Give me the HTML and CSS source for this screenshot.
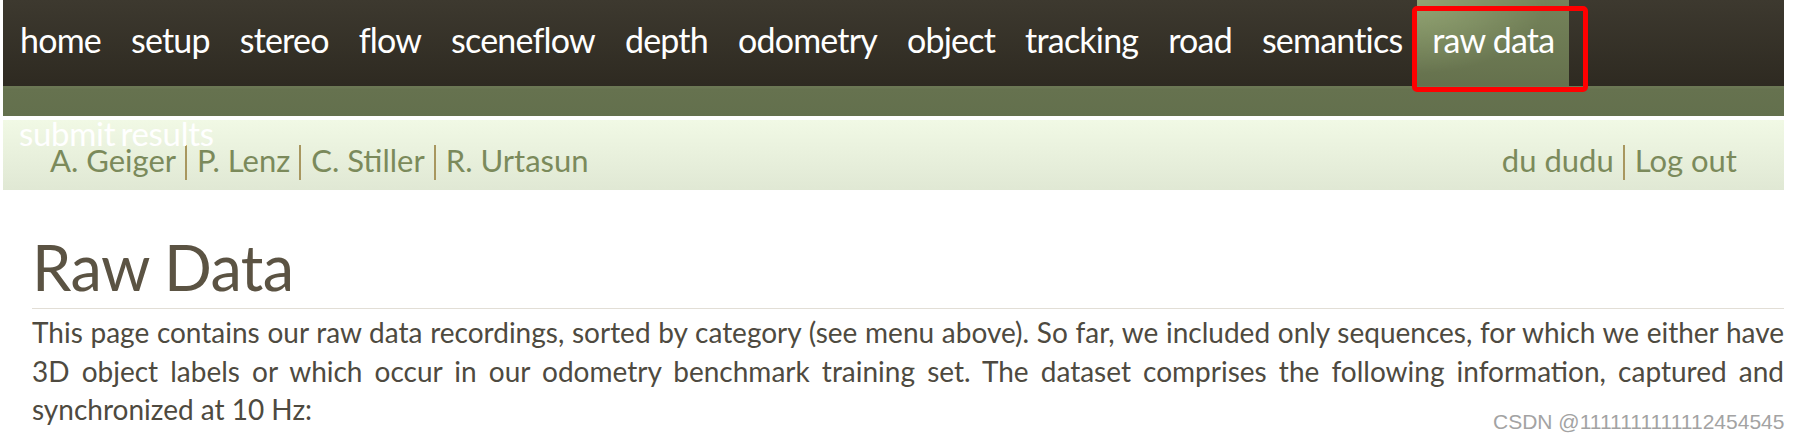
FILE: index.html
```html
<!DOCTYPE html>
<html lang="en">
<head>
<meta charset="utf-8">
<title>KITTI - Raw Data</title>
<link rel="stylesheet" href="styles.css">
</head>
<body>
<div class="page">
  <nav class="topnav">
    <a class="nav-item">home</a>
    <a class="nav-item">setup</a>
    <a class="nav-item">stereo</a>
    <a class="nav-item">flow</a>
    <a class="nav-item">sceneflow</a>
    <a class="nav-item">depth</a>
    <a class="nav-item">odometry</a>
    <a class="nav-item">object</a>
    <a class="nav-item">tracking</a>
    <a class="nav-item">road</a>
    <a class="nav-item">semantics</a>
    <a class="nav-item active">raw data</a>
  </nav>
  <div class="subnav"></div>
  <div class="authors-bar">
    <div class="authors">A. Geiger<span class="sep"></span>P. Lenz<span class="sep"></span>C. Stiller<span class="sep"></span>R. Urtasun</div>
    <div class="account">du dudu<span class="sep"></span>Log out</div>
    <span class="overflow-item">submit results</span>
  </div>
  <main class="content">
    <h1 class="title">Raw Data</h1>
    <hr class="rule">
    <p class="intro">This page contains our raw data recordings, sorted by category (see menu above). So far, we included only sequences, for which we either have 3D object labels or which occur in our odometry benchmark training set. The dataset comprises the following information, captured and synchronized at 10&nbsp;Hz:</p>
  </main>
</div>
<div class="annotation"></div>
<div class="watermark">CSDN @1111111111112454545</div>
</body>
</html>
```
FILE: styles.css
```css
html, body {
  margin: 0;
  padding: 0;
  background: #ffffff;
  overflow: hidden;
}

body {
  font-family: Lato, "Open Sans", sans-serif;
  position: relative;
  height: 438px;
}

.page {
  margin-left: 3px;
  width: 1781px;
}

.topnav {
  display: flex;
  height: 86px;
  padding-left: 2px;
  background: linear-gradient(#3d392f, #2e2a21);
}

.nav-item {
  display: block;
  padding: 20px 15px 0;
  height: 66px;
  line-height: 40px;
  font-size: 34px;
  color: #ffffff;
  letter-spacing: -0.8px;
  text-decoration: none;
}

.nav-item.active {
  background:
    radial-gradient(ellipse at 0% 0%, rgba(150, 168, 118, 0.9), rgba(150, 168, 118, 0) 60%),
    linear-gradient(#75835a, #65714d);
}

.subnav {
  height: 30px;
  background: linear-gradient(#6b7754 0, #6b7754 2px, #66724f 3px, #63704d);
}

.authors-bar {
  position: relative;
  margin-top: 4px;
  height: 70px;
  padding: 0 47px;
  box-sizing: border-box;
  display: flex;
  justify-content: space-between;
  align-items: flex-start;
  background: linear-gradient(#f1f9e5, #e0e8d4);
  font-size: 31px;
  line-height: 36px;
  color: #7b8a5b;
}

.authors, .account {
  padding-top: 22px;
  display: flex;
  align-items: center;
}

.sep {
  display: inline-block;
  width: 2px;
  height: 35px;
  margin: 0 10px 0 9px;
  background: #a8975f;
  position: relative;
  top: 2px;
}

.overflow-item {
  position: absolute;
  left: 16px;
  top: -6px;
  font-size: 33px;
  line-height: 38px;
  color: #ffffff;
  letter-spacing: -0.3px;
  word-spacing: -3px;
}

.content {
  padding: 38px 0 0 29px;
  color: #4e4a40;
}

.title {
  margin: 0;
  font-size: 63px;
  font-weight: 400;
  line-height: 77px;
  color: #5b5343;
  letter-spacing: -0.6px;
}

.rule {
  margin: 3px 0 0;
  border: 0;
  height: 1px;
  background: #e2ded6;
}

.intro {
  margin: 4px 0 0;
  font-size: 28px;
  line-height: 38.5px;
  text-align: justify;
}

.annotation {
  position: absolute;
  left: 1412px;
  top: 6px;
  width: 176px;
  height: 86px;
  box-sizing: border-box;
  border: 5px solid #ff0000;
  border-radius: 5px;
}

.watermark {
  position: absolute;
  left: 1493px;
  top: 410px;
  font-family: "Liberation Sans", Arial, sans-serif;
  font-size: 21px;
  color: #a3a3a3;
  white-space: nowrap;
}
```
